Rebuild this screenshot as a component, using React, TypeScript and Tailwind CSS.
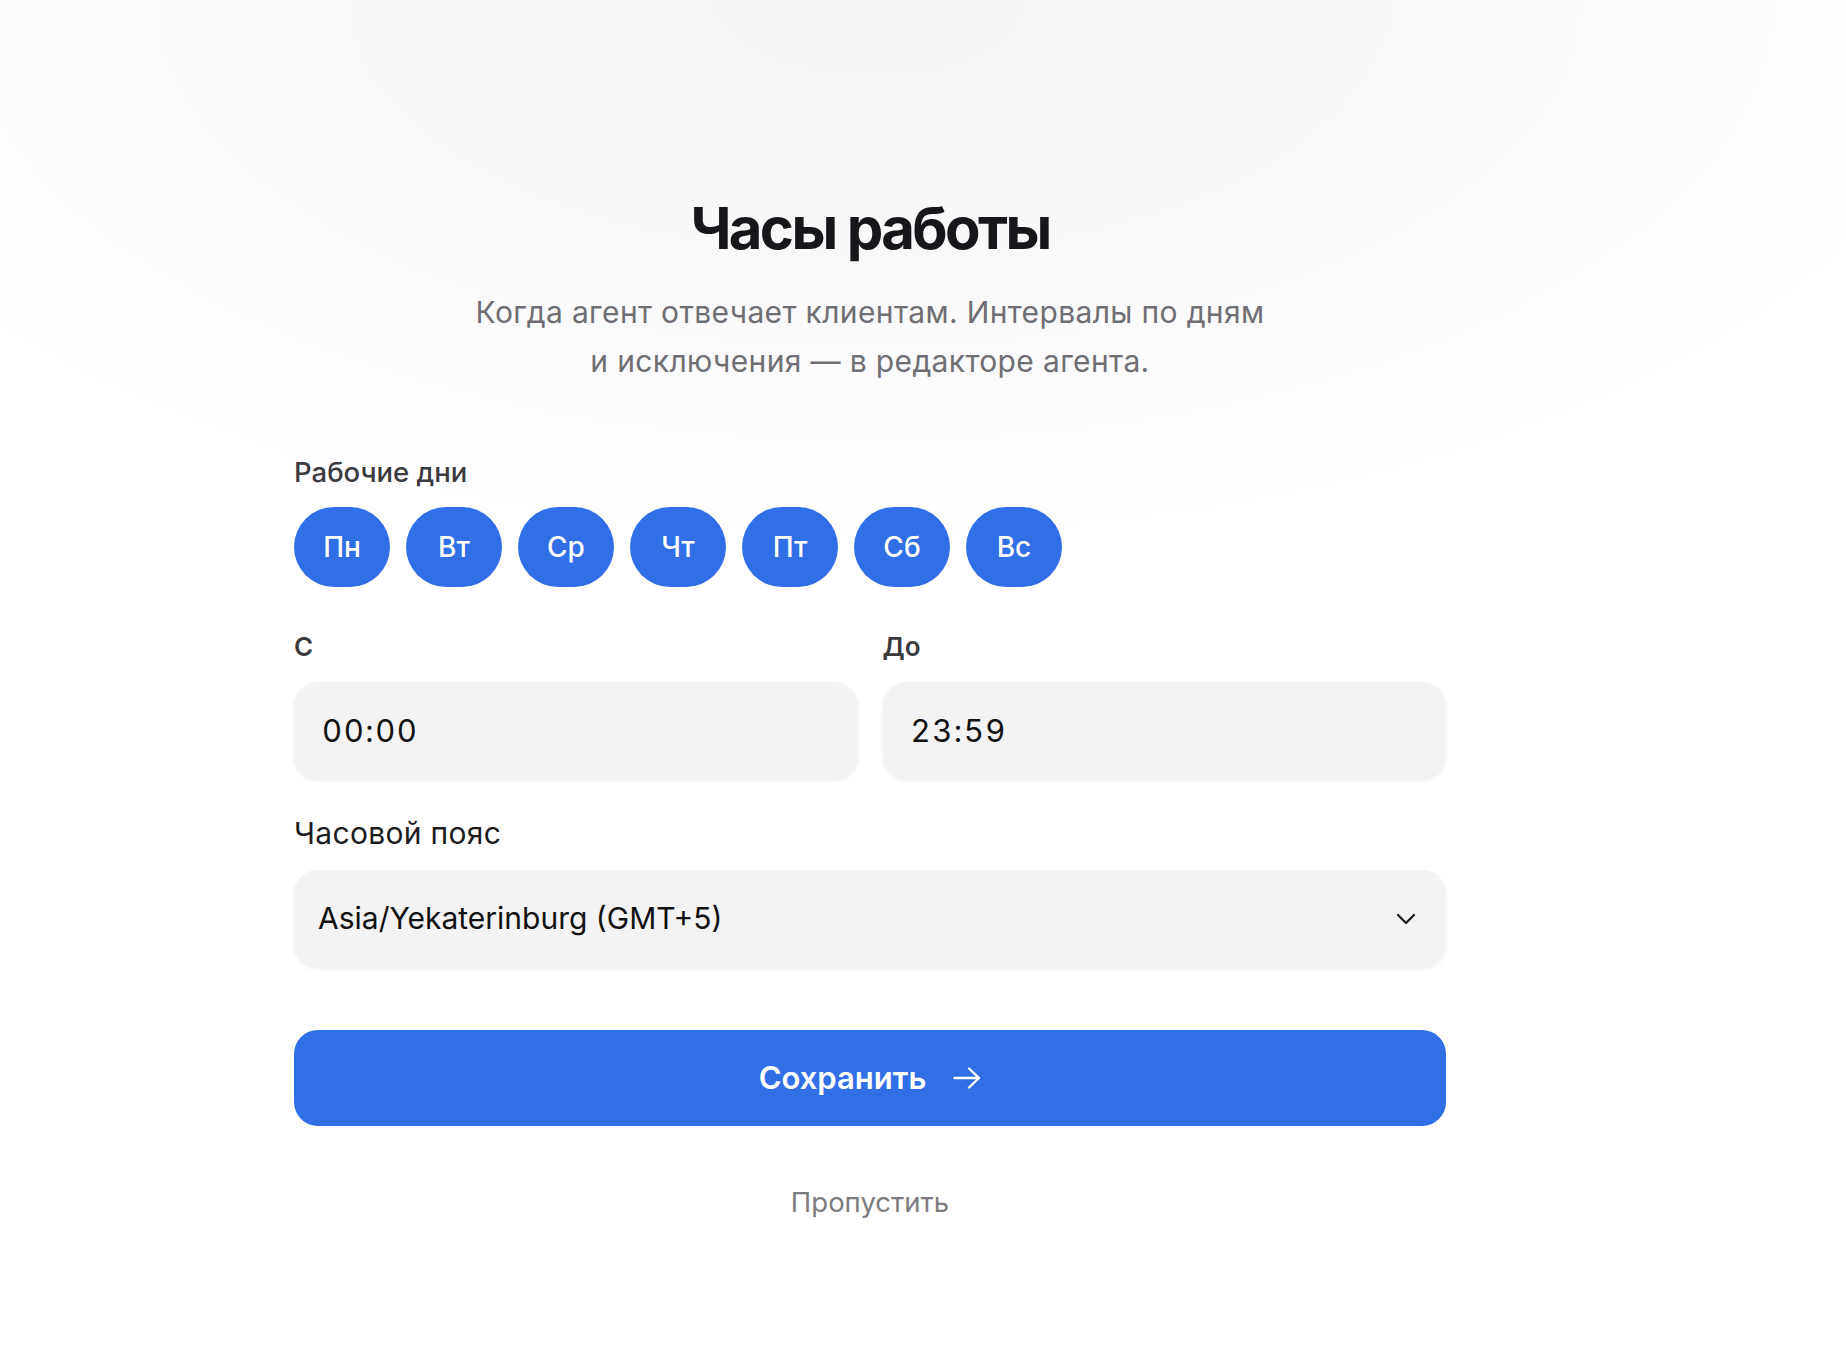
import { useState } from "react";

const days = ["Пн", "Вт", "Ср", "Чт", "Пт", "Сб", "Вс"];

function Chevron() {
  return (
    <svg width="20" height="12" viewBox="0 0 20 12" fill="none" className="text-[#1c1c1e]">
      <path d="M2 2L10 10L18 2" stroke="currentColor" strokeWidth="2.3" strokeLinecap="round" strokeLinejoin="round" />
    </svg>
  );
}

function Arrow() {
  return (
    <svg width="28" height="22" viewBox="0 0 28 22" fill="none">
      <path d="M1.5 11H26M16 1.5L26 11L16 20.5" stroke="currentColor" strokeWidth="2.4" strokeLinecap="round" strokeLinejoin="round" />
    </svg>
  );
}

function TimeField({ label, value }: { label: string; value: string }) {
  return (
    <div className="flex flex-col">
      <label className="text-[26px] leading-[36px] font-semibold text-[#3a3a3f]">{label}</label>
      <input
        defaultValue={value}
        className="mt-[17px] h-[97px] w-full rounded-[24px] bg-[#f3f3f3] px-7 text-[31px] tracking-[0.05em] text-[#111] tabular-nums shadow-[0_2px_4px_rgba(0,0,0,0.07)] outline-none"
      />
    </div>
  );
}

export default function App() {
  const [active, setActive] = useState<string[]>(days);

  const toggle = (d: string) =>
    setActive((prev) => (prev.includes(d) ? prev.filter((x) => x !== d) : [...prev, d]));

  return (
    <div className="min-h-screen w-full bg-[radial-gradient(ellipse_1150px_560px_at_870px_0px,#f5f5f5_0%,#f8f8f8_45%,#ffffff_100%)] font-['Inter',sans-serif]">
      <div className="flex justify-center pr-[106px]">
        <div className="flex w-[1152px] flex-col pt-[192px] pb-20">
          <h1 className="text-center text-[58px] font-bold leading-[72px] tracking-[-0.045em] text-[#15171a]">
            Часы работы
          </h1>
          <p className="mt-6 text-center text-[30px] leading-[49px] tracking-[0.012em] text-[#6e6e73]">
            Когда агент отвечает клиентам. Интервалы по дням
            <br />
            и исключения — в редакторе агента.
          </p>

          <div className="mt-[68px] text-[27.5px] font-medium leading-[36px] text-[#3a3a3f]">Рабочие дни</div>
          <div className="mt-[17px] flex gap-4">
            {days.map((d) => (
              <button
                key={d}
                onClick={() => toggle(d)}
                className={
                  active.includes(d)
                    ? "flex h-[80px] w-[96px] items-center justify-center rounded-full bg-[#306fe6] text-[28px] font-medium text-white"
                    : "flex h-[80px] w-[96px] items-center justify-center rounded-full bg-[#f3f3f3] text-[28px] font-medium text-[#3a3a3f]"
                }
              >
                {d}
              </button>
            ))}
          </div>

          <div className="mt-[42px] grid grid-cols-2 gap-[25px]">
            <TimeField label="С" value="00:00" />
            <TimeField label="До" value="23:59" />
          </div>

          <div className="mt-[34px] text-[30px] leading-[40px] tracking-[0.01em] text-[#1c1c1e]">Часовой пояс</div>
          <div className="mt-[17px] flex h-[97px] items-center justify-between rounded-[24px] bg-[#f3f3f3] pl-6 pr-[30px] shadow-[0_2px_4px_rgba(0,0,0,0.07)]">
            <span className="text-[30px] text-[#111]">Asia/Yekaterinburg (GMT+5)</span>
            <Chevron />
          </div>

          <button className="mt-[63px] flex h-[96px] items-center justify-center gap-[27px] rounded-[24px] bg-[#306fe6] text-[31px] font-semibold text-white">
            <span>Сохранить</span>
            <Arrow />
          </button>

          <button className="mt-[58px] self-center text-[27.5px] leading-[36px] text-[#7c7c80]">Пропустить</button>
        </div>
      </div>
    </div>
  );
}
